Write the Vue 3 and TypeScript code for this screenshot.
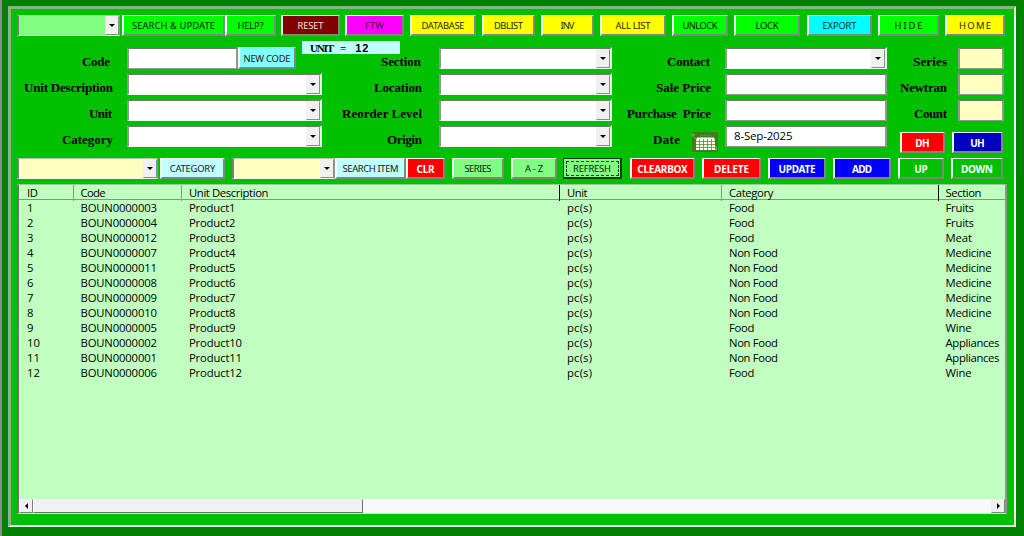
<script setup lang="ts">
import type { Directive } from 'vue'

interface Btn { id: string; text: string; tone: string; fit: number; bold?: boolean }
interface Field { label: string; fit: number; kind: 'combo' | 'input' | 'code' | 'date'; value?: string }

// Spreads a label's letters so that it fills the given width in pixels.
const vFit: Directive<HTMLElement, number> = {
  mounted(el, binding) {
    const natural = el.getBoundingClientRect().width
    const count = (el.textContent ?? '').length
    if (count < 2 || !binding.value) return
    const gap = (binding.value - natural) / (count - 1)
    el.style.letterSpacing = `${gap}px`
    el.style.marginRight = `${-gap}px`
  },
}

const toolbar: Btn[] = [
  { id: 'search', text: 'SEARCH & UPDATE', tone: 'lime', fit: 83 },
  { id: 'help', text: 'HELP?', tone: 'lime', fit: 26 },
  { id: 'reset', text: 'RESET', tone: 'maroon', fit: 26 },
  { id: 'ftw', text: 'FTW', tone: 'magenta', fit: 19 },
  { id: 'database', text: 'DATABASE', tone: 'yellow', fit: 43 },
  { id: 'dblist', text: 'DBLIST', tone: 'yellow', fit: 29 },
  { id: 'inv', text: 'INV', tone: 'yellow', fit: 14 },
  { id: 'alllist', text: 'ALL LIST', tone: 'yellow', fit: 35 },
  { id: 'unlock', text: 'UNLOCK', tone: 'lime', fit: 35 },
  { id: 'lock', text: 'LOCK', tone: 'lime', fit: 23 },
  { id: 'export', text: 'EXPORT', tone: 'cyan', fit: 34 },
  { id: 'hide', text: 'H I D E', tone: 'lime', fit: 28 },
  { id: 'home', text: 'H O M E', tone: 'yellow', fit: 32 },
]

const actions: Btn[] = [
  { id: 'clr', text: 'CLR', tone: 'red', fit: 18, bold: true },
  { id: 'series', text: 'SERIES', tone: 'mint', fit: 27 },
  { id: 'az', text: 'A - Z', tone: 'mint', fit: 18 },
  { id: 'refresh', text: 'REFRESH', tone: 'mint', fit: 38 },
  { id: 'clearbox', text: 'CLEARBOX', tone: 'red', fit: 50.5, bold: true },
  { id: 'delete', text: 'DELETE', tone: 'red', fit: 35, bold: true },
  { id: 'update', text: 'UPDATE', tone: 'blue', fit: 37, bold: true },
  { id: 'add', text: 'ADD', tone: 'blue', fit: 20, bold: true },
  { id: 'up', text: 'UP', tone: 'green', fit: 13.5, bold: true },
  { id: 'down', text: 'DOWN', tone: 'green', fit: 32, bold: true },
]

const groups: { id: string; fields: Field[] }[] = [
  { id: 'unit', fields: [
    { label: 'Code', fit: 28, kind: 'code' },
    { label: 'Unit Description', fit: 89, kind: 'combo' },
    { label: 'Unit', fit: 23, kind: 'combo' },
    { label: 'Category', fit: 51, kind: 'combo' },
  ] },
  { id: 'place', fields: [
    { label: 'Section', fit: 40, kind: 'combo' },
    { label: 'Location', fit: 48, kind: 'combo' },
    { label: 'Reorder Level', fit: 80, kind: 'combo' },
    { label: 'Origin', fit: 35, kind: 'combo' },
  ] },
  { id: 'price', fields: [
    { label: 'Contact', fit: 43, kind: 'combo' },
    { label: 'Sale Price', fit: 55, kind: 'input' },
    { label: 'Purchase  Price', fit: 84, kind: 'input' },
    { label: 'Date', fit: 27, kind: 'date', value: '8-Sep-2025' },
  ] },
]

const counters = [
  { label: 'Series', fit: 34 },
  { label: 'Newtran', fit: 47 },
  { label: 'Count', fit: 33 },
]

const headers = [
  { text: 'ID', fit: 11 },
  { text: 'Code', fit: 25 },
  { text: 'Unit Description', fit: 79.5 },
  { text: 'Unit', fit: 20.5 },
  { text: 'Category', fit: 44.5 },
  { text: 'Section', fit: 36 },
]

const raw: [string, string, string][] = [
  ['BOUN0000003', 'Food', 'Fruits'],
  ['BOUN0000004', 'Food', 'Fruits'],
  ['BOUN0000012', 'Food', 'Meat'],
  ['BOUN0000007', 'Non Food', 'Medicine'],
  ['BOUN0000011', 'Non Food', 'Medicine'],
  ['BOUN0000008', 'Non Food', 'Medicine'],
  ['BOUN0000009', 'Non Food', 'Medicine'],
  ['BOUN0000010', 'Non Food', 'Medicine'],
  ['BOUN0000005', 'Food', 'Wine'],
  ['BOUN0000002', 'Non Food', 'Appliances'],
  ['BOUN0000001', 'Non Food', 'Appliances'],
  ['BOUN0000006', 'Food', 'Wine'],
]
const widths: Record<string, number> = {
  Food: 25.5, 'Non Food': 49, Fruits: 28.5, Meat: 26.5, Medicine: 46, Wine: 26, Appliances: 54,
}
const rows = raw.map(([code, category, section], i) => [
  { text: String(i + 1), fit: i > 8 ? 13 : 0 },
  { text: code, fit: 76.5 },
  { text: `Product${i + 1}`, fit: i > 8 ? 53 : 46.5 },
  { text: 'pc(s)', fit: 25 },
  { text: category, fit: widths[category] },
  { text: section, fit: widths[section] },
])
</script>

<template>
  <main class="screen">
    <section class="panel">
      <div class="bar toolbar">
        <div class="combo finder"><i class="drop"></i></div>
        <button v-for="b in toolbar" :key="b.id" class="btn" :class="[b.tone, 'b-' + b.id]">
          <span v-fit="b.fit">{{ b.text }}</span>
        </button>
      </div>
      <div class="unit-tag"><b v-fit="24">UNIT</b><b>=</b><b v-fit="13" class="num">12</b></div>

      <div class="form">
        <div v-for="g in groups" :key="g.id" class="group" :class="'g-' + g.id">
          <div v-for="f in g.fields" :key="f.label" class="line">
            <label class="label"><span v-fit="f.fit">{{ f.label }}</span></label>
            <svg v-if="f.kind === 'date'" class="calendar" viewBox="0 0 26 20">
              <rect width="26" height="20" fill="#3c7d1c" />
              <path d="M1 1v4M0 3h3M2 5l2 2M23 14l2 2M24 15v4M22 17h3" stroke="#86a85c" fill="none" />
              <path d="M9 3.5h10" stroke="#12b45c" stroke-width="1.6" stroke-dasharray="2 .6" />
              <path d="M5 5.5h17l1 3v9.500H4v-9.500z" fill="#fbfff4" />
              <path d="M4 9.500h19M4 12.500h19M4 15.500h19M7.500 7v11M11.500 7v11M15.500 7v11M19.500 7v11" stroke="#5f8a42" stroke-width=".8" />
            </svg>
            <template v-if="f.kind === 'code'">
              <div class="input code"></div>
              <button class="btn aqua newcode"><span v-fit="47">NEW CODE</span></button>
            </template>
            <div v-else-if="f.kind === 'combo'" class="combo"><i class="drop"></i></div>
            <div v-else class="input"><span v-if="f.value" v-fit="58.5">{{ f.value }}</span></div>
          </div>
        </div>
        <div class="group g-count">
          <div v-for="c in counters" :key="c.label" class="line">
            <label class="label"><span v-fit="c.fit">{{ c.label }}</span></label>
            <div class="input cream"></div>
          </div>
          <div class="pair">
            <button class="btn red b-dh"><span v-fit="14.5">DH</span></button>
            <button class="btn navy b-uh"><span v-fit="14.5">UH</span></button>
          </div>
        </div>
      </div>

      <div class="bar filters">
        <div class="combo cream c-cat"><i class="drop"></i></div>
        <button class="btn ice b-cat"><span v-fit="45.5">CATEGORY</span></button>
        <div class="combo cream c-item"><i class="drop"></i></div>
        <button class="btn ice b-item"><span v-fit="56">SEARCH ITEM</span></button>
        <button v-for="b in actions" :key="b.id" class="btn" :class="[b.tone, 'b-' + b.id, { strong: b.bold }]">
          <span v-fit="b.fit">{{ b.text }}</span>
        </button>
      </div>

      <div class="list">
        <div class="cells head">
          <div v-for="h in headers" :key="h.text"><span v-fit="h.fit">{{ h.text }}</span></div>
        </div>
        <div class="body">
          <div v-for="(r, i) in rows" :key="i" class="cells">
            <div v-for="(c, j) in r" :key="j"><span v-fit="c.fit">{{ c.text }}</span></div>
          </div>
        </div>
        <div class="scroll">
          <div class="arrow left"></div>
          <div class="thumb"></div>
          <div class="track"></div>
          <div class="arrow right"></div>
        </div>
      </div>
    </section>
  </main>
</template>

<style>
body { margin: 0; overflow: hidden; }
</style>

<style scoped>
* { box-sizing: border-box; }
.screen {
  width: 1024px; height: 536px; background: #008000;
  border-left: 2px solid #8c8c8c; padding: 6px 8px 9px 6px;
  font-family: "Noto Sans", "Open Sans", sans-serif; color: #000;
}
.panel {
  width: 1008px; height: 521px; background: #00c000; padding: 6px 0 0 6px;
  border: 3px solid; border-color: #86b586 #e6f5e6 #e6f5e6 #86b586;
  border-width: 3px 2px 2px 3px;
}
.bar { display: flex; height: 21px; }
.toolbar { margin-bottom: 5px; }

.btn {
  display: flex; align-items: center; justify-content: center; flex: none;
  height: 21px; margin: 0; padding: 1px 0 0; border: 1px solid; border-radius: 0;
  border-color: #f4fff4 #7c8a7c #7c8a7c #f4fff4; border-width: 1px 2px 2px 2px;
  font: 9.4px "Noto Sans", sans-serif; color: #102010; white-space: pre;
}
.strong, .pair .btn { font-weight: 700; font-size: 10px; }
.lime { background: #00ff00; color: #032003; }
.maroon { background: #800000; color: #f3e4e4; }
.magenta { background: #ff00ff; color: #4a004a; }
.yellow { background: #ffff00; color: #262600; }
.cyan { background: #00ffff; color: #002a2a; }
.aqua { background: #80ffff; }
.ice { background: #c0ffff; }
.mint { background: #80ff80; }
.red { background: #ff0000; color: #fff; }
.blue { background: #0000ff; color: #fff; }
.navy { background: #0000c0; color: #fff; }
.green { background: #00c000; color: #fff; }

.finder { width: 103px; height: 21px; background: #80ff80; }
.b-search { width: 103px; margin-left: 2px; }
.b-help { width: 51px; }
.b-reset { width: 59px; margin-left: 5px; }
.b-ftw { width: 59px; margin-left: 5px; }
.b-database { width: 66px; margin-left: 6px; }
.b-dblist { width: 53px; margin-left: 6px; }
.b-inv { width: 53px; margin-left: 6px; }
.b-alllist { width: 66px; margin-left: 6px; }
.b-unlock { width: 56px; margin-left: 6px; }
.b-lock { width: 66px; margin-left: 6px; }
.b-export { width: 65px; margin-left: 7px; }
.b-hide { width: 61px; margin-left: 6px; }
.b-home { width: 60px; margin-left: 6px; }

.unit-tag {
  display: flex; align-items: center; width: 98px; height: 13px;
  margin: 0 0 -7px 285px; padding-left: 8px; background: #c0ffff; white-space: pre;
  font: 700 11px "Liberation Serif", serif;
}
.unit-tag b + b { margin-left: 6px; }
.unit-tag .num { margin-left: 9px !important; font: 700 11px "Liberation Sans", sans-serif; }

.form { display: flex; height: 111px; }
.group { display: flex; flex-direction: column; gap: 4px; flex: none; }
.line { display: flex; height: 22px; align-items: stretch; }
.label {
  flex: none; text-align: right; white-space: pre; padding-top: 6px;
  font: 700 13px/18px "Liberation Serif", serif;
}
.g-unit { width: 305px; }
.g-unit .label { width: 97px; margin-right: 13px; }
.g-unit .combo { width: 195px; }
.g-unit .line:nth-child(1) .label { padding-right: 4px; }
.g-unit .line:nth-child(2) .label { padding-right: 1px; }
.g-unit .line:nth-child(3) .label { padding-right: 2px; }
.g-unit .line:nth-child(4) .label { padding-right: 1px; }
.code { width: 111px; }
.newcode { width: 58px; height: 22px; }
.g-place { margin-left: 8px; width: 282px; }
.g-place .label { width: 92px; margin-right: 17px; }
.g-place .line:first-child .label { padding-right: 1px; }
.g-place .combo { width: 173px; }
.g-price { margin-left: 8px; width: 267px; }
.g-price .label { width: 92px; margin-right: 13px; padding-right: 1px; }
.g-price .line:first-child .label { padding-right: 2px; }
.g-price .line:last-child .label { width: 60px; margin-right: 12px; padding-right: 0; }
.g-price .combo, .g-price .input { width: 162px; }
.calendar { width: 26px; height: 20px; margin: 7px 7px 0 0; flex: none; }
.g-count { margin-left: 8px; width: 110px; }
.g-count .label { width: 52px; margin-right: 11px; }
.g-count .line:last-of-type .label { padding-right: 1px; }
.g-count .input { width: 46px; }
.pair { display: flex; gap: 7px; padding-left: 5px; margin-top: 7px; }
.b-dh { width: 45px; }
.b-uh { width: 51px; }

.input, .combo {
  flex: none; background: #fff; border: 1px solid;
  border-color: #6c7a6c #e8f8e8 #e8f8e8 #8c9a8c; border-width: 2px 2px 1px 2px;
}
.input { border-right-color: #8f9a8f; border-bottom-color: #8f9a8f; }
.g-price .input { padding-left: 7px; font: 11.5px/18px "Open Sans", sans-serif; }
.combo { display: flex; justify-content: flex-end; }
.drop {
  width: 14px; height: 100%; background: #f0f0f0; border: 1px solid;
  border-color: #f0f0f0 #8c8c8c #8c8c8c #f0f0f0; display: flex; align-items: center; justify-content: center;
}
.drop::before { content: ""; border: 3px solid transparent; border-top: 3px solid #000; border-bottom: 0; }
.input.cream, .combo.cream { background: #ffffc0; }
.finder, .filters .combo { border-color: #a9c8a9 #8c9a8c #e8f8e8 #7c7c7c; border-width: 1px 1px 1px 2px; }
.finder { background: #80ff80; }

.filters .combo { height: 21px; }
.c-cat { width: 141px; }
.b-cat { width: 65px; margin-left: 2px; }
.c-item { width: 103px; margin-left: 7px; }
.b-item { width: 71px; }
.b-clr { width: 39px; }
.b-series { width: 52px; margin-left: 7px; }
.b-az { width: 46px; margin-left: 7px; }
.b-refresh { width: 59px; margin-left: 6px; border-color: #104010; border-width: 1px 2px 2px 1px; outline: 1px dashed #104010; outline-offset: -4px; }
.b-clearbox { width: 65px; margin-left: 8px; }
.b-delete { width: 59px; margin-left: 7px; }
.b-update { width: 58px; margin-left: 7px; }
.b-add { width: 58px; margin-left: 7px; }
.b-up { width: 46px; margin-left: 7px; }
.b-down { width: 52px; margin-left: 7px; }

.list {
  display: flex; flex-direction: column; width: 990px; height: 330px; margin-top: 5px;
  background: #c0ffc0; border: 1px solid; border-color: #a0c4a0 #8c9a8c #c8e8c8 #707070;
  border-width: 1px 2px 1px 2px; font: 11.3px/15px "Open Sans", sans-serif;
}
.cells { display: grid; grid-template-columns: 54px 108px 378px 162px 217px 67px; height: 15px; white-space: pre; }
.cells > div { padding-left: 8px; }
.cells > div:nth-child(2), .cells > div:last-child { padding-left: 7.5px; }
.head { height: 15px; border-bottom: 1px solid #78a078; line-height: 16px; }
.head > div + div { border-left: 1px solid #78a078; padding-left: 7px; }
.head > div:nth-child(2), .head > div:last-child { padding-left: 6.500px; }
.head > div:nth-child(4), .head > div:nth-child(6) { border-left-color: #000; }
.body { flex: 1; }
.scroll { display: flex; height: 14px; }
.arrow { width: 14px; background: #f0f0f0; border: 1px solid; border-color: #f0f0f0 #808080 #808080 #f0f0f0; display: flex; align-items: center; justify-content: center; }
.arrow::before { content: ""; border: 3px solid transparent; }
.left::before { border-right: 3px solid #000; border-left: 0; }
.right::before { border-left: 3px solid #000; border-right: 0; }
.thumb { width: 330px; background: #f0f0f0; border: 1px solid; border-color: #f0f0f0 #707070 #707070 #fff; }
.track { flex: 1; background: #f8f8f8; }
</style>
